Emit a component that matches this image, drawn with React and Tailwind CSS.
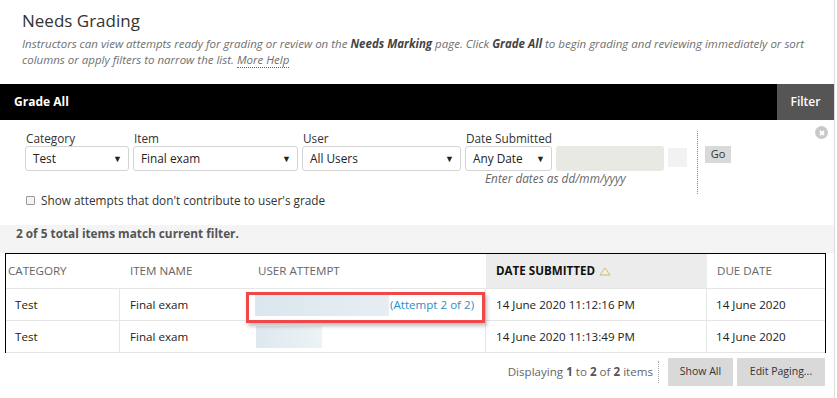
import React from "react";

const font = { fontFamily: '"Open Sans", "Liberation Sans", sans-serif' };

function Select({ w, label, text }) {
  return (
    <div className="flex flex-col">
      <div className="text-[11.8px] leading-[15px] text-[#333] pl-[1px] h-[15px]">{label}</div>
      <div
        className={`${w} h-[25px] border border-[#d4d4d4] rounded-[3px] bg-white flex items-center justify-between pl-[7px] pr-[6px] text-[11.8px] text-[#222]`}
      >
        <span>{text}</span>
        <span className="text-[9px] text-[#222]">▼</span>
      </div>
    </div>
  );
}

export default function App() {
  return (
    <div style={font} className="w-[837px] h-[398px] bg-white overflow-hidden">
      <div className="w-[835px] h-[398px] border-r border-[#dcdcdc] relative">
        {/* Title */}
        <div className="pl-[22px] pt-[9px] h-[84px]">
          <div className="text-[17px] leading-[24px] text-[#333]">Needs Grading</div>
          <div className="text-[11.5px] leading-[16px] italic text-[#6f6f6f] mt-[3px]">
            Instructors can view attempts ready for grading or review on the{" "}
            <b className="text-[#444]">Needs Marking</b> page. Click <b className="text-[#444]">Grade All</b> to begin
            grading and reviewing immediately or sort
            <br />
            columns or apply filters to narrow the list.{" "}
            <span className="border-b border-dotted border-[#666]">More Help</span>
          </div>
        </div>

        {/* Black bar */}
        <div className="h-[36px] bg-black flex items-center justify-between">
          <span className="pl-[14px] text-white font-bold text-[12px]">Grade All</span>
          <div className="h-full w-[57px] bg-[#555] flex items-center justify-center text-white text-[12px] font-semibold">
            Filter
          </div>
        </div>

        {/* Filter area */}
        <div className="relative h-[105px] pl-[25px] pt-[11px]">
          <div className="flex items-start">
            <div className="flex gap-[4px]">
              <Select w="w-[104px]" label="Category" text="Test" />
              <Select w="w-[165px]" label="Item" text="Final exam" />
              <Select w="w-[159px]" label="User" text="All Users" />
              <div className="flex flex-col">
                <div className="text-[11.8px] leading-[15px] text-[#333] pl-[1px] h-[15px]">Date Submitted</div>
                <div className="flex items-start gap-[4px]">
                  <div className="w-[87px] h-[25px] border border-[#d4d4d4] rounded-[3px] bg-white flex items-center justify-between pl-[7px] pr-[6px] text-[11.8px] text-[#222]">
                    <span>Any Date</span>
                    <span className="text-[9px]">▼</span>
                  </div>
                  <div className="w-[108px] h-[25px] rounded-[3px] bg-[#e9e9e4]" />
                  <div className="w-[19px] h-[19px] mt-[2px] bg-[#f2f2f2]" />
                </div>
                <div className="pl-[20px] text-[11.8px] italic text-[#666] leading-[16px] mt-[-1px]">
                  Enter dates as dd/mm/yyyy
                </div>
              </div>
            </div>
            <div className="ml-[10px] h-[63px] border-l border-dotted border-[#888]" />
            <div className="ml-[7px] mt-[15px] w-[26px] h-[17px] bg-[#d9d9d9] text-[11px] text-[#333] flex items-center justify-center">
              Go
            </div>
          </div>
          <div className="flex items-center mt-[-2px] text-[11.8px] text-[#333]">
            <div className="w-[9px] h-[9px] border border-[#999] rounded-[1px] bg-[#f4f4f4] ml-[1px]" />
            <span className="ml-[6px]">Show attempts that don't contribute to user's grade</span>
          </div>
          <div className="absolute right-[6px] top-[6px] w-[13px] h-[13px] rounded-full bg-[#c9c9c9] flex items-center justify-center">
            <svg width="8" height="8" viewBox="0 0 8 8">
              <path d="M2 2L6 6M6 2L2 6" stroke="white" strokeWidth="1.8" />
            </svg>
          </div>
        </div>

        {/* Match bar */}
        <div className="h-[28px] bg-[#f4f4f4] pl-[16px] pt-[1px] leading-[14px] text-[11.8px] font-bold text-[#555]">
          2 of 5 total items match current filter.
        </div>

        {/* Table */}
        <div className="ml-[5px] w-[821px] border-t border-l border-r border-black">
          <div className="flex h-[35px] items-center text-[11.6px] text-[#666] border-b border-[#e6e6e6]">
            <div className="w-[114px] pl-[2px]">CATEGORY</div>
            <div className="w-[126px] pl-[10px]">ITEM NAME</div>
            <div className="w-[240px] pl-[12px]">USER ATTEMPT</div>
            <div className="w-[221px] h-full bg-[#ececec] pl-[10px] flex items-center font-bold text-[#111]">
              DATE SUBMITTED
              <svg className="ml-[4px] mt-[1px]" width="12" height="9" viewBox="0 0 12 9">
                <path d="M6 1L11 8H1Z" fill="#f6efd6" stroke="#c8b98a" strokeWidth="1" />
              </svg>
            </div>
            <div className="flex-1 pl-[10px]">DUE DATE</div>
          </div>
          <div className="flex h-[32px] items-center text-[11.6px] text-[#222] border-b border-[#e6e6e6]">
            <div className="w-[114px] h-full flex items-center pl-[9px] border-r border-[#e6e6e6]">Test</div>
            <div className="w-[126px] pl-[10px]">Final exam</div>
            <div className="w-[240px] h-full relative flex items-center pl-[9px] border-r border-[#e6e6e6]">
              <div className="w-[134px] h-[22px] bg-gradient-to-r from-[#dbe6ee] to-[#e6eef3]" />
              <span className="text-[#2b8fc6] text-[11.6px] ml-[1px]">(Attempt 2 of 2)</span>
              <div className="absolute left-0 top-[3px] w-[239px] h-[31px] border-[3px] border-[#f04848] shadow-[2px_3px_4px_rgba(0,0,0,0.25)]" />
            </div>
            <div className="w-[221px] h-full flex items-center pl-[10px] border-r border-[#e6e6e6]">14 June 2020 11:12:16 PM</div>
            <div className="flex-1 pl-[9px]">14 June 2020</div>
          </div>
          <div className="flex h-[32px] items-center text-[11.6px] text-[#222] border-b border-[#e6e6e6]">
            <div className="w-[114px] h-full flex items-center pl-[9px] border-r border-[#e6e6e6]">Test</div>
            <div className="w-[126px] pl-[10px]">Final exam</div>
            <div className="w-[240px] h-full flex items-center pl-[10px] border-r border-[#e6e6e6]">
              <div className="w-[66px] h-[22px] bg-gradient-to-r from-[#dde8ef] to-[#edf3f6]" />
            </div>
            <div className="w-[221px] h-full flex items-center pl-[10px] border-r border-[#e6e6e6]">14 June 2020 11:13:49 PM</div>
            <div className="flex-1 pl-[9px]">14 June 2020</div>
          </div>
        </div>

        {/* Footer */}
        <div className="flex items-center justify-end pr-[9px] mt-[5px]">
          <span className="text-[11.6px] text-[#666]">
            Displaying <b className="text-[#555]">1</b> to <b className="text-[#555]">2</b> of{" "}
            <b className="text-[#555]">2</b> items
          </span>
          <div className="ml-[5px] h-[22px] border-l border-dotted border-[#aaa]" />
          <div className="ml-[9px] w-[65px] h-[28px] bg-[#d9d9d9] text-[10.5px] text-[#333] flex items-center justify-center">
            Show All
          </div>
          <div className="ml-[4px] w-[88px] h-[28px] bg-[#d9d9d9] text-[10.5px] text-[#333] flex items-center justify-center">
            Edit Paging...
          </div>
        </div>
      </div>
    </div>
  );
}
